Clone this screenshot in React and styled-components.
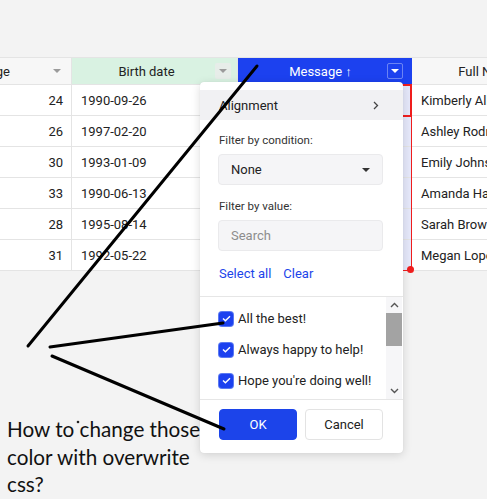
import React from 'react';
import styled, { createGlobalStyle, css } from 'styled-components';

const GlobalStyle = createGlobalStyle`
  html, body { margin: 0; padding: 0; background: #f3f3f3; }
  body { font-family: Roboto, "Noto Sans", Arial, sans-serif; overflow: hidden; color: #222; }
  * { box-sizing: border-box; }
`;

const Page = styled.div`
  position: relative;
  width: 487px;
  height: 499px;
  overflow: hidden;
  padding-top: 57px;
  background: #f3f3f3;
`;

const Table = styled.div`
  margin-left: -62px;
  width: 634px;
  border-top: 1px solid #e4e4e4;
`;

const Row = styled.div`
  display: grid;
  grid-template-columns: 134px 166px 174px 160px;
`;

const headerBg = {
  plain: '#f7f7f7',
  green: '#d9f2e2',
  active: '#1c41ef',
};

const HeaderCell = styled.div`
  height: 27px;
  display: flex;
  align-items: center;
  background: ${(p) => headerBg[p.$variant]};
  color: ${(p) => (p.$variant === 'active' ? '#fff' : '#222')};
  border-right: 1px solid ${(p) => (p.$variant === 'active' ? '#1c41ef' : '#e4e4e4')};
  border-bottom: 1px solid #e4e4e4;
  font-size: 13px;
`;

const HeaderLabel = styled.span`
  flex: 1;
  text-align: center;
  padding-left: ${(p) => p.$pad || 0}px;
  white-space: nowrap;
`;

const MenuButton = styled.span`
  width: 16px;
  height: 16px;
  margin-right: 6px;
  display: flex;
  align-items: center;
  justify-content: center;
  border-radius: 2px;
  ${(p) =>
    p.$variant === 'green' &&
    css`
      background: #e7ede9;
    `}
  ${(p) =>
    p.$variant === 'active' &&
    css`
      margin-right: 8px;
      border: 1px solid rgba(255, 255, 255, 0.35);
    `}
`;

const Caret = styled.span`
  width: 0;
  height: 0;
  border-left: 4px solid transparent;
  border-right: 4px solid transparent;
  border-top: 4px solid ${(p) => p.$color || '#9b9b9b'};
`;

const Cell = styled.div`
  height: 31px;
  display: flex;
  align-items: center;
  justify-content: ${(p) => (p.$right ? 'flex-end' : 'flex-start')};
  padding: 0 ${(p) => (p.$right ? 8 : 0)}px 0 ${(p) => (p.$right ? 0 : 9)}px;
  background: ${(p) => (p.$selected ? '#e5e8fa' : '#fff')};
  border-right: 1px solid #e4e4e4;
  border-bottom: 1px solid #e4e4e4;
  font-size: 13px;
  color: #222;
  white-space: nowrap;
  overflow: hidden;
`;

const SelectionArea = styled.div`
  position: absolute;
  left: 238px;
  top: 84px;
  width: 174px;
  height: 187px;
  border: 1px solid #f01e1e;
  pointer-events: none;
`;

const CurrentCell = styled.div`
  position: absolute;
  left: 238px;
  top: 84px;
  width: 174px;
  height: 33px;
  border: 2px solid #f01e1e;
  pointer-events: none;
`;

const FillHandle = styled.div`
  position: absolute;
  left: 407px;
  top: 266px;
  width: 7px;
  height: 7px;
  border-radius: 50%;
  background: #f01e1e;
`;

const Popup = styled.div`
  position: absolute;
  left: 200px;
  top: 82px;
  width: 203px;
  height: 371px;
  background: #fff;
  border-radius: 4px;
  box-shadow: 0 2px 10px rgba(0, 0, 0, 0.14), 0 0 1px rgba(0, 0, 0, 0.1);
  padding-top: 8px;
  display: flex;
  flex-direction: column;
  font-size: 13px;
  color: #222;
`;

const MenuItem = styled.div`
  height: 30px;
  background: #f1f1f3;
  display: flex;
  align-items: center;
  justify-content: space-between;
  padding: 0 24px 0 19px;
  font-size: 13px;
`;

const FilterSection = styled.div`
  padding: 12px 20px 14px 18px;
  display: flex;
  flex-direction: column;
  border-bottom: 1px solid #e6e6e6;
`;

const Label = styled.div`
  font-size: 11.5px;
  line-height: 16px;
  color: #333;
  margin-left: 1px;
  margin-top: ${(p) => p.$mt || 0}px;
`;

const Field = styled.div`
  margin-top: 6px;
  height: 31px;
  border: 1px solid #eaeaec;
  border-radius: 4px;
  background: #f5f5f7;
  display: flex;
  align-items: center;
  justify-content: space-between;
  padding: 0 12px 0 12px;
  font-size: 13px;
  color: ${(p) => (p.$placeholder ? '#8d8d8d' : '#222')};
`;

const Links = styled.div`
  margin-top: 15px;
  display: flex;
  gap: 12px;
  line-height: 16px;
  padding-left: 1px;
`;

const Link = styled.span`
  color: #1c44ea;
  font-size: 13px;
`;

const ListArea = styled.div`
  height: 103px;
  display: flex;
  border-bottom: 1px solid #e6e6e6;
`;

const Items = styled.div`
  flex: 1;
  padding: 6px 0 0 19px;
  overflow: hidden;
`;

const Item = styled.div`
  height: 31px;
  display: flex;
  align-items: center;
  gap: 5px;
  font-size: 13px;
  white-space: nowrap;
`;

const Check = styled.span`
  width: 14px;
  height: 14px;
  border-radius: 3px;
  background: #1c41ef;
  box-shadow: 0 0 0 1px #5b79f2;
  display: flex;
  align-items: center;
  justify-content: center;
  flex: none;
`;

const Scrollbar = styled.div`
  width: 16px;
  margin-right: 1px;
  background: #f6f6f8;
  display: flex;
  flex-direction: column;
`;

const ScrollArrow = styled.div`
  height: 16px;
  display: flex;
  align-items: center;
  justify-content: center;
`;

const ScrollTrack = styled.div`
  flex: 1;
`;

const ScrollThumb = styled.div`
  height: 33px;
  background: #a3a3a3;
`;

const Buttons = styled.div`
  padding: 9px 20px 0 19px;
  display: flex;
  gap: 8px;
`;

const Button = styled.button`
  width: 78px;
  height: 31px;
  border-radius: 4px;
  font-family: Roboto, Arial, sans-serif;
  font-size: 13px;
  ${(p) =>
    p.$primary
      ? css`
          background: #1c44ea;
          border: 1px solid #1c44ea;
          color: #fff;
        `
      : css`
          background: #fff;
          border: 1px solid #e3e3e3;
          color: #222;
        `}
`;

const Overlay = styled.svg`
  position: absolute;
  left: 0;
  top: 0;
  width: 487px;
  height: 499px;
  pointer-events: none;
`;

const Note = styled.div`
  position: absolute;
  left: 7px;
  top: 416px;
  font-family: Lato, "Open Sans", sans-serif;
  font-size: 20.7px;
  line-height: 27.5px;
  color: #111;
  white-space: nowrap;
`;

const ages = [24, 26, 30, 33, 28, 31];
const dates = ['1990-09-26', '1997-02-20', '1993-01-09', '1990-06-13', '1995-08-14', '1992-05-22'];
const names = ['Kimberly Allen', 'Ashley Rodriguez', 'Emily Johnson', 'Amanda Harris', 'Sarah Brown', 'Megan Lopez'];
const messages = ['All the best!', 'Always happy to help!', "Hope you're doing well!"];

const Chevron = ({ dir }) => (
  <svg width="9" height="6" viewBox="0 0 9 6">
    <path
      d={dir === 'up' ? 'M1 5 L4.5 1.5 L8 5' : 'M1 1 L4.5 4.5 L8 1'}
      fill="none"
      stroke="#555"
      strokeWidth="1.4"
    />
  </svg>
);

export default function App() {
  return (
    <>
      <GlobalStyle />
      <Page>
        <Table>
          <Row>
            <HeaderCell $variant="plain">
              <HeaderLabel $pad={10}>Age</HeaderLabel>
              <MenuButton $variant="plain">
                <Caret />
              </MenuButton>
            </HeaderCell>
            <HeaderCell $variant="green">
              <HeaderLabel $pad={6}>Birth date</HeaderLabel>
              <MenuButton $variant="green">
                <Caret />
              </MenuButton>
            </HeaderCell>
            <HeaderCell $variant="active">
              <HeaderLabel $pad={16}>Message ↑</HeaderLabel>
              <MenuButton $variant="active">
                <Caret $color="#fff" />
              </MenuButton>
            </HeaderCell>
            <HeaderCell $variant="plain">
              <HeaderLabel $pad={14}>Full Name</HeaderLabel>
              <MenuButton $variant="plain">
                <Caret />
              </MenuButton>
            </HeaderCell>
          </Row>
          {ages.map((a, i) => (
            <Row key={i}>
              <Cell $right>{a}</Cell>
              <Cell>{dates[i]}</Cell>
              <Cell $selected>{messages[i % 3]}</Cell>
              <Cell>{names[i]}</Cell>
            </Row>
          ))}
        </Table>

        <SelectionArea />
        <CurrentCell />
        <FillHandle />

        <Popup>
          <MenuItem>
            <span>Alignment</span>
            <svg width="6" height="9" viewBox="0 0 6 9">
              <path d="M1 1 L4.5 4.5 L1 8" fill="none" stroke="#444" strokeWidth="1.3" />
            </svg>
          </MenuItem>
          <FilterSection>
            <Label>Filter by condition:</Label>
            <Field>
              <span>None</span>
              <Caret $color="#333" />
            </Field>
            <Label $mt={13}>Filter by value:</Label>
            <Field $placeholder>Search</Field>
            <Links>
              <Link>Select all</Link>
              <Link>Clear</Link>
            </Links>
          </FilterSection>
          <ListArea>
            <Items>
              {messages.map((m) => (
                <Item key={m}>
                  <Check>
                    <svg width="9" height="7" viewBox="0 0 9 7">
                      <path d="M1 3.6 L3.4 5.8 L8 1.2" fill="none" stroke="#fff" strokeWidth="1.4" />
                    </svg>
                  </Check>
                  <span>{m}</span>
                </Item>
              ))}
            </Items>
            <Scrollbar>
              <ScrollArrow>
                <Chevron dir="up" />
              </ScrollArrow>
              <ScrollThumb />
              <ScrollTrack />
              <ScrollArrow>
                <Chevron dir="down" />
              </ScrollArrow>
            </Scrollbar>
          </ListArea>
          <Buttons>
            <Button $primary>OK</Button>
            <Button>Cancel</Button>
          </Buttons>
        </Popup>

        <Overlay viewBox="0 0 487 499">
          <g stroke="#000" strokeWidth="3" strokeLinecap="round">
            <line x1="28" y1="346" x2="257" y2="66" />
            <line x1="50" y1="347" x2="223" y2="323" />
            <line x1="52" y1="356" x2="224" y2="429" />
          </g>
          <circle cx="78" cy="422" r="1.3" fill="#222" />
        </Overlay>

        <Note>
          How to change those
          <br />
          color with overwrite
          <br />
          css?
        </Note>
      </Page>
    </>
  );
}
